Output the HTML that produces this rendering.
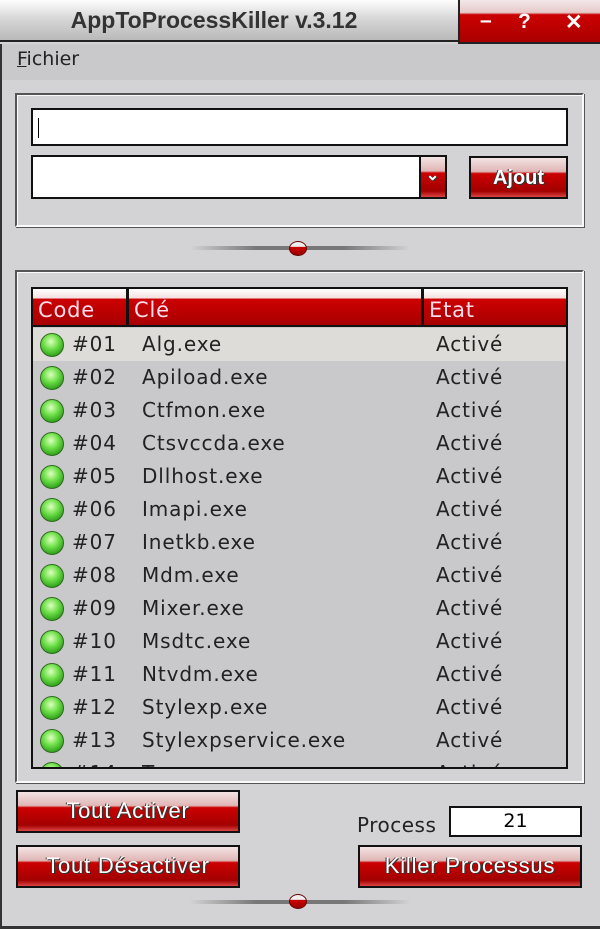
<!DOCTYPE html>
<html><head><meta charset="utf-8"><style>
*{margin:0;padding:0;box-sizing:border-box}
body{width:600px;height:929px;overflow:hidden;background:#d3d2d4;font-family:"DejaVu Sans","Liberation Sans",sans-serif;position:relative}
.abs{position:absolute}
.title{left:0;top:0;width:458px;height:42px;background:linear-gradient(#fdfdfd,#d8d8d8 45%,#b9b9b9);border-bottom:2px solid #222;font-family:"Liberation Sans",sans-serif;font-weight:bold;font-size:23px;color:#333;text-align:center;line-height:40px;padding-right:30px}
.tred{left:458px;top:0;width:142px;height:44px;background:linear-gradient(#f2e8e8,#e7c8c8 30%,#c00 35%,#a00);border-left:2px solid #222;border-bottom:2px solid #222;color:#fff;font-family:"Liberation Sans",sans-serif;font-weight:bold;font-size:21px}
.menu{left:2px;top:44px;width:598px;height:36px;background:#c9c8ca;font-size:19px;color:#222;padding:4px 15px}
.frame{left:0;top:44px;width:600px;height:885px;border-left:2px solid #333;border-bottom:3px solid #333}
.group{border:2px solid #555;border-right-color:#fafafa;border-bottom-color:#fafafa;box-shadow:1px 1px 0 #555,inset 1px 1px 0 #fafafa}
.inp{background:#fff;border:2px solid #111}
.btn{background:linear-gradient(#f3e3e3,#e0b5b5 35%,#c00 40%,#a20000 85%,#d44);border:2px solid #111;color:#fff;font-family:"Liberation Sans",sans-serif;font-size:22px;letter-spacing:0.8px;text-align:center;text-shadow:1px 1px 0 #333,-1px 0 0 #333}
.slider{height:4px;background:linear-gradient(90deg,rgba(0,0,0,0),#777 30%,#777 70%,rgba(0,0,0,0))}
.knob{width:18px;height:15px;border-radius:50%;background:linear-gradient(#eee 35%,#c00 40%,#900);border:1px solid #600}
.list{left:31px;top:287px;width:537px;height:482px;border:2px solid #111;background:#c9c8ca;overflow:hidden}
.hdr{position:absolute;top:0;height:38px;background:linear-gradient(#fff,#f5e0e0 25%,#c00 28%,#a80000);color:#fde;font-size:21px;letter-spacing:0.8px;line-height:42px;padding-left:5px;border-right:3px solid #111;border-bottom:2px solid #111}
.row{position:absolute;left:0;width:533px;height:33px;font-size:20px;letter-spacing:0.9px;color:#222;line-height:33px}
.dot{position:absolute;left:7px;top:5px;width:24px;height:24px;border-radius:50%;background:radial-gradient(circle at 45% 35%,#dfffc0,#6fe04a 40%,#2b9d16 80%);border:1px solid #2e6a20}
</style></head><body>
<div class="abs title">AppToProcessKiller v.3.12</div>
<div class="abs tred"><span class="abs" style="left:20px;top:9px">–</span><span class="abs" style="left:58px;top:10px">?</span><span class="abs" style="left:105px;top:10px">✕</span></div>
<div class="abs menu"><u>F</u>ichier</div>
<div class="abs frame"></div>

<div class="abs group" style="left:15px;top:93px;width:569px;height:134px"></div>
<div class="abs inp" style="left:31px;top:108px;width:537px;height:38px"><div style="position:absolute;left:5px;top:8px;width:1px;height:20px;background:#000"></div></div>
<div class="abs inp" style="left:31px;top:155px;width:416px;height:44px"></div>
<div class="abs btn" style="left:419px;top:155px;width:28px;height:44px;font-size:16px;line-height:38px;font-weight:bold">⌄</div>
<div class="abs btn" style="left:469px;top:156px;width:99px;height:43px;font-weight:bold;line-height:40px;font-size:20px;letter-spacing:0">Ajout</div>

<div class="abs slider" style="left:190px;top:246px;width:220px"></div>
<div class="abs knob" style="left:289px;top:241px"></div>

<div class="abs group" style="left:15px;top:270px;width:569px;height:513px"></div>
<div class="abs list">
<div class="hdr" style="left:0;width:96px">Code</div>
<div class="hdr" style="left:96px;width:295px">Clé</div>
<div class="hdr" style="left:391px;width:146px;border-right:none">Etat</div>
<div class="row" style="top:39px;background:#dddcd8"><div class="dot"></div><span class="abs" style="left:39px">#01</span><span class="abs" style="left:109px">Alg.exe</span><span class="abs" style="left:403px">Activé</span></div>
<div class="row" style="top:72px"><div class="dot"></div><span class="abs" style="left:39px">#02</span><span class="abs" style="left:109px">Apiload.exe</span><span class="abs" style="left:403px">Activé</span></div>
<div class="row" style="top:105px"><div class="dot"></div><span class="abs" style="left:39px">#03</span><span class="abs" style="left:109px">Ctfmon.exe</span><span class="abs" style="left:403px">Activé</span></div>
<div class="row" style="top:138px"><div class="dot"></div><span class="abs" style="left:39px">#04</span><span class="abs" style="left:109px">Ctsvccda.exe</span><span class="abs" style="left:403px">Activé</span></div>
<div class="row" style="top:171px"><div class="dot"></div><span class="abs" style="left:39px">#05</span><span class="abs" style="left:109px">Dllhost.exe</span><span class="abs" style="left:403px">Activé</span></div>
<div class="row" style="top:204px"><div class="dot"></div><span class="abs" style="left:39px">#06</span><span class="abs" style="left:109px">Imapi.exe</span><span class="abs" style="left:403px">Activé</span></div>
<div class="row" style="top:237px"><div class="dot"></div><span class="abs" style="left:39px">#07</span><span class="abs" style="left:109px">Inetkb.exe</span><span class="abs" style="left:403px">Activé</span></div>
<div class="row" style="top:270px"><div class="dot"></div><span class="abs" style="left:39px">#08</span><span class="abs" style="left:109px">Mdm.exe</span><span class="abs" style="left:403px">Activé</span></div>
<div class="row" style="top:303px"><div class="dot"></div><span class="abs" style="left:39px">#09</span><span class="abs" style="left:109px">Mixer.exe</span><span class="abs" style="left:403px">Activé</span></div>
<div class="row" style="top:336px"><div class="dot"></div><span class="abs" style="left:39px">#10</span><span class="abs" style="left:109px">Msdtc.exe</span><span class="abs" style="left:403px">Activé</span></div>
<div class="row" style="top:369px"><div class="dot"></div><span class="abs" style="left:39px">#11</span><span class="abs" style="left:109px">Ntvdm.exe</span><span class="abs" style="left:403px">Activé</span></div>
<div class="row" style="top:402px"><div class="dot"></div><span class="abs" style="left:39px">#12</span><span class="abs" style="left:109px">Stylexp.exe</span><span class="abs" style="left:403px">Activé</span></div>
<div class="row" style="top:435px"><div class="dot"></div><span class="abs" style="left:39px">#13</span><span class="abs" style="left:109px">Stylexpservice.exe</span><span class="abs" style="left:403px">Activé</span></div>
<div class="row" style="top:468px"><div class="dot"></div><span class="abs" style="left:39px">#14</span><span class="abs" style="left:109px">Tcpsvcs.exe</span><span class="abs" style="left:403px">Activé</span></div>
</div>

<div class="abs btn" style="left:16px;top:790px;width:224px;height:43px;line-height:38px">Tout Activer</div>
<div class="abs btn" style="left:16px;top:845px;width:224px;height:43px;line-height:38px">Tout Désactiver</div>
<div class="abs" style="left:357px;top:813px;font-size:20px;letter-spacing:0.5px;color:#222">Process</div>
<div class="abs inp" style="left:449px;top:806px;width:133px;height:31px;text-align:center;font-size:19px;line-height:27px">21</div>
<div class="abs btn" style="left:358px;top:845px;width:224px;height:43px;line-height:38px">Killer Processus</div>

<div class="abs slider" style="left:190px;top:900px;width:220px"></div>
<div class="abs knob" style="left:289px;top:894px"></div>
</body></html>
